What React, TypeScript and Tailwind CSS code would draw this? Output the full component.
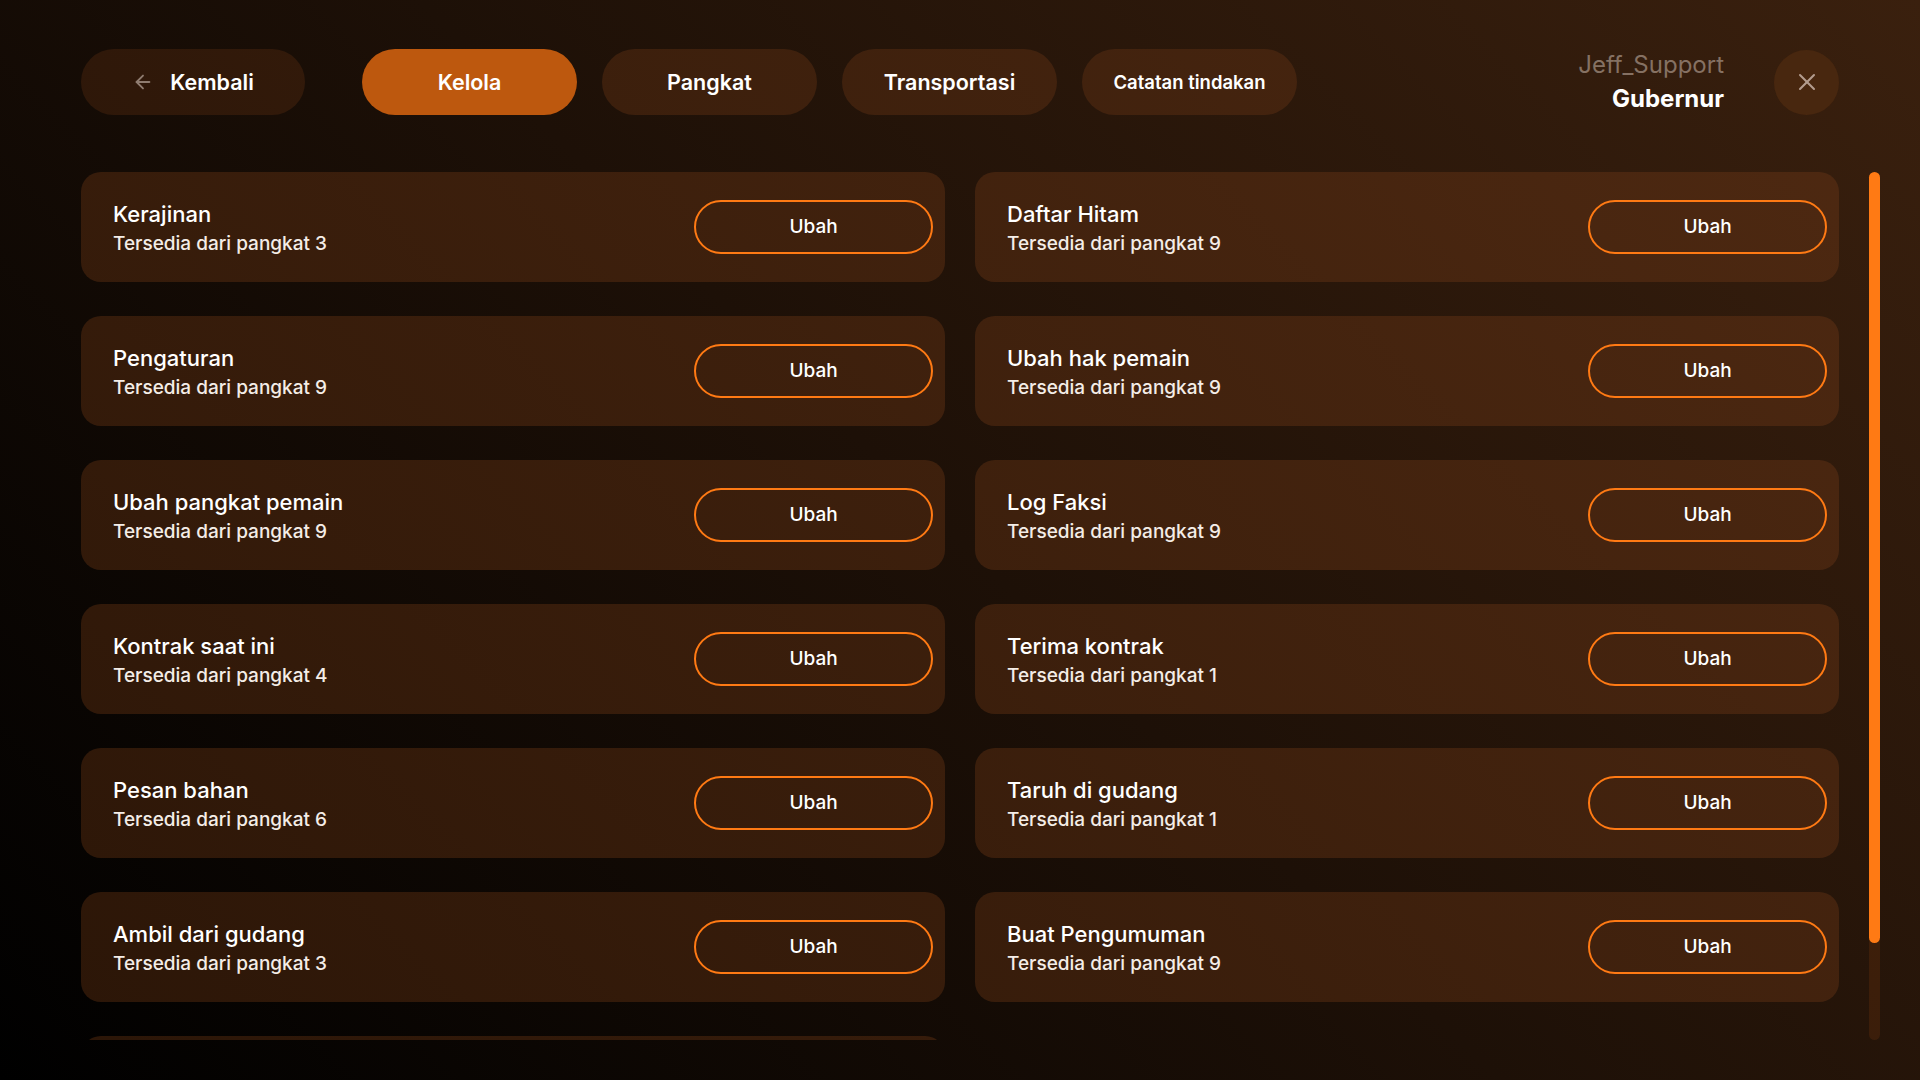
import { ArrowLeft, X } from "lucide-react";

const permissions = [
  { title: "Kerajinan", rank: 3 },
  { title: "Daftar Hitam", rank: 9 },
  { title: "Pengaturan", rank: 9 },
  { title: "Ubah hak pemain", rank: 9 },
  { title: "Ubah pangkat pemain", rank: 9 },
  { title: "Log Faksi", rank: 9 },
  { title: "Kontrak saat ini", rank: 4 },
  { title: "Terima kontrak", rank: 1 },
  { title: "Pesan bahan", rank: 6 },
  { title: "Taruh di gudang", rank: 1 },
  { title: "Ambil dari gudang", rank: 3 },
  { title: "Buat Pengumuman", rank: 9 },
  { title: "Kelola kendaraan", rank: 5 },
];

const tabs = ["Kelola", "Pangkat", "Transportasi", "Catatan tindakan"];

function PermissionCard({ title, rank }: { title: string; rank: number }) {
  return (
    <div className="flex h-[110px] items-center justify-between rounded-[20px] bg-[linear-gradient(45deg,#2a1507,#502a12)] bg-fixed pl-8 pr-3">
      <div className="flex flex-col gap-1 pt-[2px]">
        <span className="text-[22px] font-medium leading-7 text-white">{title}</span>
        <span className="text-[19px] font-medium leading-6 text-[#f4ede7]">
          Tersedia dari pangkat {rank}
        </span>
      </div>
      <button className="flex h-[54px] w-[239px] items-center justify-center rounded-full border-2 border-[#ff7a14] pt-[1px] text-[19px] font-medium text-white">
        Ubah
      </button>
    </div>
  );
}

export default function App() {
  return (
    <div
      className="flex h-[1080px] w-[1920px] flex-col overflow-hidden bg-[linear-gradient(45deg,#000,#3a200e)] px-[81px] pt-[49px]"
      style={{ fontFamily: "Inter, 'Noto Sans', sans-serif" }}
    >
      <header className="flex h-[66px] items-center">
        <button className="flex h-[66px] w-[224px] items-center justify-center gap-4 rounded-full bg-[linear-gradient(45deg,#1f0f05,#4a2710)] bg-fixed text-[21.5px] font-semibold text-white">
          <ArrowLeft size={22} strokeWidth={2} className="text-[#8f7c70]" />
          Kembali
        </button>
        <nav className="ml-[57px] flex gap-[25px]">
          {tabs.map((t, i) => (
            <button
              key={t}
              className={
                i === 0
                  ? "flex h-[66px] w-[215px] items-center justify-center rounded-full bg-[#bd580e] text-[21.5px] font-semibold text-white"
                  : i === 3
                    ? "flex h-[66px] w-[215px] items-center justify-center rounded-full bg-[linear-gradient(45deg,#2a1507,#4c2811)] bg-fixed pt-[1px] text-[18.5px] font-semibold text-white"
                    : "flex h-[66px] w-[215px] items-center justify-center rounded-full bg-[linear-gradient(45deg,#2a1507,#4c2811)] bg-fixed text-[21.5px] font-semibold text-white"
              }
            >
              {t}
            </button>
          ))}
        </nav>
        <div className="ml-auto flex flex-col items-end gap-[4px]">
          <span className="text-[24px] leading-[30px] text-[#857163]">Jeff_Support</span>
          <span className="text-[24px] font-bold leading-[30px] text-white">Gubernur</span>
        </div>
        <button className="ml-[50px] flex h-[65px] w-[65px] items-center justify-center rounded-full bg-[#48270f]">
          <X size={28} strokeWidth={1.75} className="text-[#b39c8e]" />
        </button>
      </header>

      <div className="-mr-[41px] mt-[57px] flex h-[868px] gap-[30px]">
        <div className="h-full w-[1758px] overflow-hidden">
          <div className="grid grid-cols-2 gap-x-[30px] gap-y-[34px]">
            {permissions.map((p) => (
              <PermissionCard key={p.title} title={p.title} rank={p.rank} />
            ))}
          </div>
        </div>
        <div className="relative h-full w-[11px] rounded-full bg-[#ff7a14]/10">
          <div className="h-[771px] w-full rounded-full bg-[#ff7a14]" />
        </div>
      </div>
    </div>
  );
}
